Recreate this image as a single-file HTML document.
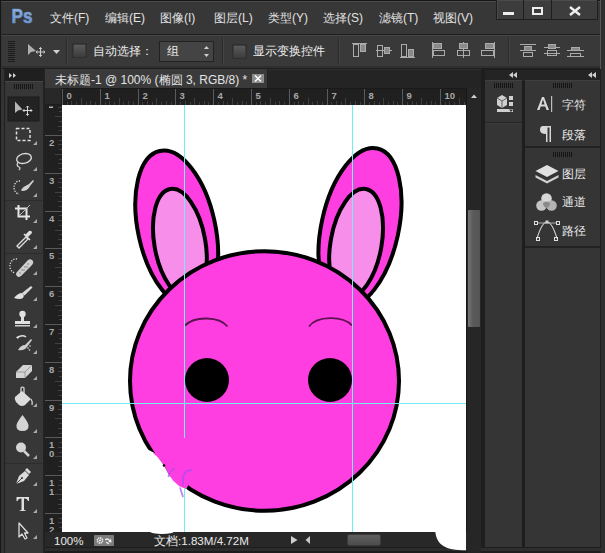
<!DOCTYPE html>
<html><head><meta charset="utf-8">
<style>
*{margin:0;padding:0;box-sizing:border-box}
html,body{width:605px;height:553px;overflow:hidden;background:#1b1b1b}
body{position:relative;font-family:"Liberation Sans",sans-serif;color:#cfcfcf;font-size:12px}
.a{position:absolute}
.menu span{position:absolute;top:10px;font-size:12px;line-height:16px;color:#e2e2e2;white-space:nowrap}
.opt{font-size:12px;color:#ececec;white-space:nowrap;line-height:14px}
.rl{position:absolute;font-size:10px;color:#a8a8a8;line-height:10px}
.ptxt{position:absolute;font-size:12px;color:#e8e8e8;line-height:14px;white-space:nowrap}
</style></head><body>
<!-- window frame -->
<div class="a" style="left:0;top:0;width:605px;height:553px;background:#161616"></div>
<div class="a" style="left:1px;top:1px;width:600px;height:552px;background:#333;border-top:1px solid #4a4a4a"></div>
<!-- right border -->
<div class="a" style="left:600px;top:0;width:5px;height:553px;background:#2e2e2e;border-left:1px solid #555"></div>

<!-- title/menu bar -->
<div class="a" style="left:2px;top:2px;width:598px;height:32px;background:#373737"></div>
<svg class="a" style="left:0;top:0" width="40" height="32"><defs><linearGradient id="psg" x1="0" y1="0" x2="0" y2="1"><stop offset="0" stop-color="#9ebde6"/><stop offset="1" stop-color="#5e88c6"/></linearGradient></defs><text x="11.5" y="23.3" font-family="Liberation Sans" font-weight="bold" font-size="20.5" fill="url(#psg)" stroke="#6f95cf" stroke-width="0.7" textLength="21" lengthAdjust="spacingAndGlyphs">Ps</text></svg>
<div class="menu">
<span style="left:50px">文件(F)</span>
<span style="left:105px">编辑(E)</span>
<span style="left:160px">图像(I)</span>
<span style="left:214px">图层(L)</span>
<span style="left:268px">类型(Y)</span>
<span style="left:323px">选择(S)</span>
<span style="left:379px">滤镜(T)</span>
<span style="left:433px">视图(V)</span>
</div>
<!-- window buttons -->
<div class="a" style="left:496px;top:0;width:102px;height:20px;background:#3d3d3d;border:1px solid #1e1e1e;border-top:none;box-shadow:inset 1px 1px 0 #4a4a4a"></div>
<div class="a" style="left:523px;top:0;width:1px;height:19px;background:#1e1e1e"></div>
<div class="a" style="left:551px;top:0;width:1px;height:19px;background:#1e1e1e"></div>
<div class="a" style="left:503px;top:12px;width:11px;height:3px;background:#eee"></div>
<div class="a" style="left:532px;top:7px;width:11px;height:8px;border:2px solid #eee"></div>
<svg class="a" style="left:567px;top:5px" width="16" height="12"><path d="M3 2 L13 10 M13 2 L3 10" stroke="#eee" stroke-width="2.4"/></svg>

<!-- options bar -->
<div class="a" style="left:2px;top:34px;width:598px;height:1px;background:#1e1e1e"></div>
<div class="a" style="left:2px;top:35px;width:598px;height:33px;background:#393939;border-top:1px solid #474747;border-bottom:2px solid #2f2f2f"></div>
<div class="a" style="left:2px;top:68px;width:598px;height:1px;background:#1e1e1e"></div>

<!-- options bar content -->
<svg class="a" style="left:0;top:35px" width="605" height="33">
 <g fill="#1c1c1c"><rect x="8" y="6" width="7" height="1"/><rect x="8" y="8" width="7" height="1"/><rect x="8" y="10" width="7" height="1"/><rect x="8" y="12" width="7" height="1"/><rect x="8" y="14" width="7" height="1"/><rect x="8" y="16" width="7" height="1"/><rect x="8" y="18" width="7" height="1"/><rect x="8" y="20" width="7" height="1"/><rect x="8" y="22" width="7" height="1"/><rect x="8" y="24" width="7" height="1"/><rect x="8" y="26" width="7" height="1"/></g>
 <path d="M28 9 L28 20 L31 17 L36 16 Z" fill="#b0b0b0"/>
 <path d="M40.5 12.5 V21.5 M36 17 H45" stroke="#d0d0d0" stroke-width="1.1"/>
 <path d="M39 14 L40.5 12.5 L42 14 M39 20 L40.5 21.5 L42 20 M37.5 15.5 L36 17 L37.5 18.5 M43.5 15.5 L45 17 L43.5 18.5" stroke="#d0d0d0" stroke-width="0.9" fill="none"/>
 <path d="M53 15 L60 15 L56.5 19 Z" fill="#cfcfcf"/>
 <rect x="66" y="3" width="1" height="27" fill="#2a2a2a"/><rect x="67" y="3" width="1" height="27" fill="#454545"/>
 <rect x="73" y="9" width="13" height="13" fill="#555" stroke="#262626" stroke-width="1"/>
 <rect x="74" y="10" width="11" height="11" fill="url(#cb)"/>
 <rect x="159.5" y="6.5" width="54" height="20" fill="#444" stroke="#222"/>
 <path d="M204 14 L206.5 11 L209 14 Z M204 19 L206.5 22 L209 19 Z" fill="#cfcfcf"/>
 <rect x="222" y="3" width="1" height="27" fill="#2a2a2a"/><rect x="223" y="3" width="1" height="27" fill="#454545"/>
 <rect x="233" y="10" width="13" height="13" fill="#555" stroke="#262626"/>
 <rect x="234" y="11" width="11" height="11" fill="url(#cb)"/>
 <rect x="338" y="3" width="1" height="27" fill="#2a2a2a"/><rect x="339" y="3" width="1" height="27" fill="#454545"/>
 <rect x="508" y="3" width="1" height="27" fill="#2a2a2a"/><rect x="509" y="3" width="1" height="27" fill="#454545"/>
 <defs><linearGradient id="cb" x1="0" y1="0" x2="0" y2="1"><stop offset="0" stop-color="#5a5a5a"/><stop offset="1" stop-color="#3e3e3e"/></linearGradient></defs>
 <g stroke="#ababab" stroke-width="1" fill="none">
  <!-- align top -->
  <path d="M352 8.5 H367"/><rect x="353.5" y="9.5" width="5" height="12"/><rect x="360.5" y="9.5" width="5" height="7" fill="#8a8a8a"/>
  <!-- align vcenter -->
  <path d="M376 15.5 H392"/><rect x="377.5" y="10.5" width="5" height="11"/><rect x="384.5" y="12.5" width="5" height="6" fill="#8a8a8a"/>
  <!-- align bottom -->
  <path d="M400 22.5 H415"/><rect x="401.5" y="9.5" width="5" height="12"/><rect x="408.5" y="14.5" width="5" height="7" fill="#8a8a8a"/>
  <!-- align left -->
  <path d="M432.5 7 V23"/><rect x="433.5" y="8.5" width="8" height="5" fill="#8a8a8a"/><rect x="433.5" y="15.5" width="11" height="5"/>
  <!-- align hcenter -->
  <path d="M463.5 7 V23"/><rect x="459.5" y="8.5" width="8" height="5" fill="#8a8a8a"/><rect x="457.5" y="15.5" width="12" height="5"/>
  <!-- align right -->
  <path d="M494.5 7 V23"/><rect x="485.5" y="8.5" width="8" height="5" fill="#8a8a8a"/><rect x="481.5" y="15.5" width="12" height="5"/>
  <!-- distribute -->
  <path d="M520 9.5 H536 M520 15.5 H536"/><rect x="524.5" y="11.5" width="7" height="4" fill="#8a8a8a"/><rect x="523.5" y="17.5" width="9" height="4"/>
  <path d="M544 12.5 H560 M544 18.5 H560"/><rect x="548.5" y="9.5" width="7" height="4" fill="#8a8a8a"/><rect x="547.5" y="15.5" width="9" height="5"/>
  <path d="M567 15.5 H584 M567 21.5 H584"/><rect x="571.5" y="12.5" width="8" height="3" fill="#8a8a8a"/><rect x="570.5" y="18.5" width="10" height="3"/>
 </g>
</svg>
<div class="a opt" style="left:93px;top:44px">自动选择：</div>
<div class="a opt" style="left:167px;top:44px">组</div>
<div class="a opt" style="left:253px;top:44px">显示变换控件</div>

<!-- left tool panel -->
<div class="a" style="left:1px;top:69px;width:44px;height:484px;background:#333"></div>
<div class="a" style="left:4px;top:69px;width:41px;height:484px;background:#222"></div>
<div class="a" style="left:5px;top:69px;width:38px;height:12px;background:#1f1f1f"></div>
<div class="a" style="left:5px;top:81px;width:38px;height:472px;background:#373737;border-top:1px solid #474747;border-left:1px solid #343434"></div>
<svg class="a" style="left:0;top:69px" width="45" height="484">
 <path d="M9 4 L12 6.5 L9 9 Z M13 4 L16 6.5 L13 9 Z" fill="#cfcfcf"/>
 <g fill="#161616"><rect x="14" y="15" width="1" height="5"/><rect x="16" y="15" width="1" height="5"/><rect x="18" y="15" width="1" height="5"/><rect x="20" y="15" width="1" height="5"/><rect x="22" y="15" width="1" height="5"/><rect x="24" y="15" width="1" height="5"/><rect x="26" y="15" width="1" height="5"/><rect x="28" y="15" width="1" height="5"/><rect x="30" y="15" width="1" height="5"/><rect x="32" y="15" width="1" height="5"/></g>
</svg>
<svg class="a" style="left:0;top:0" width="45" height="553">
 <rect x="8" y="97" width="31" height="24" fill="#232323" stroke="#1c1c1c"/>
 <g fill="#a9a9a9"><path d="M33 145 L37 141 L37 145 Z"/><path d="M33 171 L37 167 L37 171 Z"/><path d="M33 197 L37 193 L37 197 Z"/><path d="M33 223 L37 219 L37 223 Z"/><path d="M33 249 L37 245 L37 249 Z"/><path d="M33 275 L37 271 L37 275 Z"/><path d="M33 301 L37 297 L37 301 Z"/><path d="M33 328 L37 324 L37 328 Z"/><path d="M33 354 L37 350 L37 354 Z"/><path d="M33 380 L37 376 L37 380 Z"/><path d="M33 407 L37 403 L37 407 Z"/><path d="M33 433 L37 429 L37 433 Z"/><path d="M33 459 L37 455 L37 459 Z"/><path d="M33 486 L37 482 L37 486 Z"/><path d="M33 513 L37 509 L37 513 Z"/><path d="M33 539 L37 535 L37 539 Z"/></g>
 <!-- separators -->
 <g fill="#2c2c2c"><rect x="5" y="200" width="37" height="1"/><rect x="5" y="253" width="37" height="1"/><rect x="5" y="463" width="37" height="1"/></g>
 <!-- move -->
 <path d="M15 101.5 L15 113 L18 110.5 L22.5 109.5 Z" fill="#b5b5b5"/>
 <path d="M27.5 106 V115.5 M23 110.5 H32" stroke="#d6d6d6" stroke-width="1"/>
 <path d="M26 107.5 L27.5 106 L29 107.5 M26 114 L27.5 115.5 L29 114 M24.5 109 L23 110.5 L24.5 112 M30.5 109 L32 110.5 L30.5 112" stroke="#d6d6d6" stroke-width="0.9" fill="none"/>
 <!-- marquee -->
 <rect x="16.5" y="128.5" width="13.5" height="12" fill="none" stroke="#e0e0e0" stroke-width="1.5" stroke-dasharray="3 2"/>
 <!-- lasso -->
 <ellipse cx="24" cy="158.5" rx="7.5" ry="4.8" transform="rotate(-15 24 158.5)" fill="none" stroke="#d8d8d8" stroke-width="1.4"/>
 <path d="M18 162 Q16 166 19 167 Q21 168 19 170" fill="none" stroke="#d0d0d0" stroke-width="1.3"/>
 <!-- quick selection -->
 <path d="M20 181 A5 6 0 1 0 19 194" fill="none" stroke="#e0e0e0" stroke-width="1.4" stroke-dasharray="1.2 1.4"/>
 <path d="M21 190 Q24 186 29 184 L33 180 L34 181 L30 186 Q28 191 22 191 Z" fill="#cfcfcf"/>
 <!-- crop -->
 <path d="M18.5 205 V216.5 H30 M15 208.5 H26.5 V220" fill="none" stroke="#e6e6e6" stroke-width="2"/>
 <path d="M20 215 L30 205" stroke="#bbb" stroke-width="1"/>
 <!-- eyedropper -->
 <path d="M17 246 L26 237 L28 239 L19 248 Z" fill="none" stroke="#e0e0e0" stroke-width="1.3"/>
 <path d="M25 235 L29 231 Q32 230 32 233 L28 237 Z" fill="#e0e0e0"/>
 <path d="M24 234 L30 240" stroke="#e0e0e0" stroke-width="1.5"/>
 <!-- healing -->
 <path d="M17 272 L28 260 Q31 258 33 261 Q34 263 32 265 L21 276 Q18 278 17 276 Q15 274 17 272 Z" fill="#cfcfcf"/>
 <path d="M17 259 A6 7 0 0 0 15 273" fill="none" stroke="#e0e0e0" stroke-width="1.3" stroke-dasharray="1.2 1.4"/>
 <g fill="#707070"><circle cx="22" cy="270" r=".7"/><circle cx="25" cy="267" r=".7"/><circle cx="28" cy="264" r=".7"/><circle cx="20" cy="273" r=".7"/><circle cx="24" cy="270" r=".7"/><circle cx="27" cy="267" r=".7"/></g>
 <!-- brush -->
 <path d="M22 293 L31 286 L32.5 287.5 L24.5 295.5 Z" fill="#d8d8d8"/>
 <path d="M14 298 Q18 293 22 293 Q25 295 23 298 Q20 300 14 298 Z" fill="#e0e0e0"/>
 <!-- stamp -->
 <circle cx="22.5" cy="314" r="3.2" fill="#e0e0e0"/>
 <rect x="21" y="316" width="3" height="5" fill="#e0e0e0"/>
 <path d="M15 321 H30 V324 H15 Z" fill="#e0e0e0"/>
 <rect x="15" y="325" width="15" height="1.5" fill="#cfcfcf"/>
 <!-- history brush -->
 <path d="M17 338 Q22 334 26 337" fill="none" stroke="#e0e0e0" stroke-width="1.5"/>
 <path d="M16 337 L19 336 L18 339 Z" fill="#e0e0e0"/>
 <path d="M18 350 Q21 345 25 345 L31 339 L32 340 L27 347 Q24 351 18 350 Z" fill="#cfcfcf"/>
 <g fill="#e6e6e6"><circle cx="28" cy="348" r=".8"/><circle cx="30" cy="346" r=".8"/><circle cx="29.5" cy="350" r=".8"/></g>
 <!-- eraser -->
 <path d="M16 372 L23 365 L32 365 L32 371 L25 378 L16 378 Z" fill="#d4d4d4"/>
 <path d="M16 372 H25 L32 365 M25 372 V378" stroke="#8a8a8a" stroke-width="0.8" fill="none"/>
 <!-- paint bucket -->
 <path d="M15 397 L22 391 L31 399 L25 405 Q22 407 19 405 L16 402 Q14 399 15 397 Z" fill="#dcdcdc"/>
 <path d="M21 395 V388 Q22 386 24 388 V396" fill="none" stroke="#e0e0e0" stroke-width="1.2"/>
 <path d="M31 399 Q33 402 32 405" fill="none" stroke="#d8d8d8" stroke-width="1.3"/>
 <!-- blur drop -->
 <path d="M22.5 415 Q17 422 16.5 425 Q16 431 22.5 431 Q29 431 28.5 425 Q28 422 22.5 415 Z" fill="#d4d4d4"/>
 <!-- dodge -->
 <circle cx="21" cy="447.5" r="5" fill="#d4d4d4"/>
 <path d="M24 451 L29 456" stroke="#d4d4d4" stroke-width="2.5"/>
 <!-- pen -->
 <path d="M16 484 L19 476 L25 471 L29 475 L24 481 Z" fill="#dcdcdc"/>
 <path d="M25 470 L27 468 L31 472 L29 474 Z" fill="#dcdcdc"/>
 <path d="M16 484 L22 478" stroke="#333" stroke-width="0.9"/>
 <circle cx="22" cy="478" r="1" fill="#333"/>
 <!-- type -->
 <path d="M16.5 497 H29 V501 H28 Q27.5 498.5 25 498.5 H24 V509.5 Q24 510.5 26 510.5 V511 H19.5 V510.5 Q21.5 510.5 21.5 509.5 V498.5 H20.5 Q18 498.5 17.5 501 H16.5 Z" fill="#dedede"/>
 <!-- path select -->
 <path d="M19 523 L19 537 L22 534 L25 539 L27 538 L24.5 533 L28 533 Z" fill="none" stroke="#dcdcdc" stroke-width="1.3" stroke-linejoin="round"/>
</svg>

<!-- document area -->
<div class="a" style="left:45px;top:69px;width:440px;height:484px;background:#242424;border-top:1px solid #2f2f2f"></div>
<!-- tab -->
<div class="a" style="left:45px;top:69px;width:223px;height:19px;background:#3a3a3a;border-right:1px solid #222"></div>
<div class="a" style="left:55px;top:73px;font-size:12px;line-height:14px;color:#e4e4e4;white-space:nowrap">未标题-1 @ 100% (椭圆 3, RGB/8) *</div>
<div class="a" style="left:252px;top:74px;width:12px;height:9px;background:#8c8c8c"></div>
<svg class="a" style="left:252px;top:74px" width="12" height="9"><path d="M3 1.5 L9 7.5 M9 1.5 L3 7.5" stroke="#fff" stroke-width="1.5"/></svg>
<!-- rulers -->
<div class="a" style="left:45px;top:88px;width:421px;height:17px;background:#202020;border-top:1px solid #1a1a1a"></div>
<div class="a" style="left:45px;top:105px;width:17px;height:427px;background:#202020"></div>
<div class="a" style="left:45px;top:88px;width:17px;height:17px;background:#282828;border-right:1px solid #1c1c1c;border-bottom:1px solid #1c1c1c"></div>
<svg class="a" style="left:0;top:0" width="605" height="553" id="rulers">
<g fill="#404040">
<rect x="62" y="89" width="1" height="16" fill="#5a5a5a"/>
<rect x="67" y="102" width="1" height="3"/>
<rect x="71" y="101" width="1" height="4"/>
<rect x="76" y="102" width="1" height="3"/>
<rect x="81" y="98" width="1" height="7"/>
<rect x="86" y="102" width="1" height="3"/>
<rect x="90" y="101" width="1" height="4"/>
<rect x="95" y="102" width="1" height="3"/>
<rect x="100" y="89" width="1" height="16" fill="#5a5a5a"/>
<rect x="105" y="102" width="1" height="3"/>
<rect x="109" y="101" width="1" height="4"/>
<rect x="114" y="102" width="1" height="3"/>
<rect x="119" y="98" width="1" height="7"/>
<rect x="123" y="102" width="1" height="3"/>
<rect x="128" y="101" width="1" height="4"/>
<rect x="133" y="102" width="1" height="3"/>
<rect x="138" y="89" width="1" height="16" fill="#5a5a5a"/>
<rect x="142" y="102" width="1" height="3"/>
<rect x="147" y="101" width="1" height="4"/>
<rect x="152" y="102" width="1" height="3"/>
<rect x="156" y="98" width="1" height="7"/>
<rect x="161" y="102" width="1" height="3"/>
<rect x="166" y="101" width="1" height="4"/>
<rect x="171" y="102" width="1" height="3"/>
<rect x="175" y="89" width="1" height="16" fill="#5a5a5a"/>
<rect x="180" y="102" width="1" height="3"/>
<rect x="185" y="101" width="1" height="4"/>
<rect x="190" y="102" width="1" height="3"/>
<rect x="194" y="98" width="1" height="7"/>
<rect x="199" y="102" width="1" height="3"/>
<rect x="204" y="101" width="1" height="4"/>
<rect x="208" y="102" width="1" height="3"/>
<rect x="213" y="89" width="1" height="16" fill="#5a5a5a"/>
<rect x="218" y="102" width="1" height="3"/>
<rect x="223" y="101" width="1" height="4"/>
<rect x="227" y="102" width="1" height="3"/>
<rect x="232" y="98" width="1" height="7"/>
<rect x="237" y="102" width="1" height="3"/>
<rect x="242" y="101" width="1" height="4"/>
<rect x="246" y="102" width="1" height="3"/>
<rect x="251" y="89" width="1" height="16" fill="#5a5a5a"/>
<rect x="256" y="102" width="1" height="3"/>
<rect x="260" y="101" width="1" height="4"/>
<rect x="265" y="102" width="1" height="3"/>
<rect x="270" y="98" width="1" height="7"/>
<rect x="275" y="102" width="1" height="3"/>
<rect x="279" y="101" width="1" height="4"/>
<rect x="284" y="102" width="1" height="3"/>
<rect x="289" y="89" width="1" height="16" fill="#5a5a5a"/>
<rect x="294" y="102" width="1" height="3"/>
<rect x="298" y="101" width="1" height="4"/>
<rect x="303" y="102" width="1" height="3"/>
<rect x="308" y="98" width="1" height="7"/>
<rect x="312" y="102" width="1" height="3"/>
<rect x="317" y="101" width="1" height="4"/>
<rect x="322" y="102" width="1" height="3"/>
<rect x="327" y="89" width="1" height="16" fill="#5a5a5a"/>
<rect x="331" y="102" width="1" height="3"/>
<rect x="336" y="101" width="1" height="4"/>
<rect x="341" y="102" width="1" height="3"/>
<rect x="345" y="98" width="1" height="7"/>
<rect x="350" y="102" width="1" height="3"/>
<rect x="355" y="101" width="1" height="4"/>
<rect x="360" y="102" width="1" height="3"/>
<rect x="364" y="89" width="1" height="16" fill="#5a5a5a"/>
<rect x="369" y="102" width="1" height="3"/>
<rect x="374" y="101" width="1" height="4"/>
<rect x="379" y="102" width="1" height="3"/>
<rect x="383" y="98" width="1" height="7"/>
<rect x="388" y="102" width="1" height="3"/>
<rect x="393" y="101" width="1" height="4"/>
<rect x="397" y="102" width="1" height="3"/>
<rect x="402" y="89" width="1" height="16" fill="#5a5a5a"/>
<rect x="407" y="102" width="1" height="3"/>
<rect x="412" y="101" width="1" height="4"/>
<rect x="416" y="102" width="1" height="3"/>
<rect x="421" y="98" width="1" height="7"/>
<rect x="426" y="102" width="1" height="3"/>
<rect x="431" y="101" width="1" height="4"/>
<rect x="435" y="102" width="1" height="3"/>
<rect x="440" y="89" width="1" height="16" fill="#5a5a5a"/>
<rect x="445" y="102" width="1" height="3"/>
<rect x="449" y="101" width="1" height="4"/>
<rect x="454" y="102" width="1" height="3"/>
<rect x="459" y="98" width="1" height="7"/>
<rect x="464" y="102" width="1" height="3"/>
</g>
<g font-family="Liberation Sans" font-size="9.5" font-weight="bold" fill="#a8a8a8">
<text x="66.5" y="98.5">0</text>
<text x="104.5" y="98.5">1</text>
<text x="142.5" y="98.5">2</text>
<text x="179.5" y="98.5">3</text>
<text x="217.5" y="98.5">4</text>
<text x="255.5" y="98.5">5</text>
<text x="293.5" y="98.5">6</text>
<text x="331.5" y="98.5">7</text>
<text x="368.5" y="98.5">8</text>
<text x="406.5" y="98.5">9</text>
<text x="444.5" y="98.5">10</text>
</g>
<g fill="#404040">
<rect x="58" y="107" width="4" height="1"/>
<rect x="59" y="111" width="3" height="1"/>
<rect x="55" y="116" width="7" height="1"/>
<rect x="59" y="121" width="3" height="1"/>
<rect x="58" y="126" width="4" height="1"/>
<rect x="59" y="130" width="3" height="1"/>
<rect x="45" y="135" width="17" height="1" fill="#5a5a5a"/>
<rect x="59" y="140" width="3" height="1"/>
<rect x="58" y="144" width="4" height="1"/>
<rect x="59" y="149" width="3" height="1"/>
<rect x="55" y="154" width="7" height="1"/>
<rect x="59" y="159" width="3" height="1"/>
<rect x="58" y="163" width="4" height="1"/>
<rect x="59" y="168" width="3" height="1"/>
<rect x="45" y="173" width="17" height="1" fill="#5a5a5a"/>
<rect x="59" y="178" width="3" height="1"/>
<rect x="58" y="182" width="4" height="1"/>
<rect x="59" y="187" width="3" height="1"/>
<rect x="55" y="192" width="7" height="1"/>
<rect x="59" y="196" width="3" height="1"/>
<rect x="58" y="201" width="4" height="1"/>
<rect x="59" y="206" width="3" height="1"/>
<rect x="45" y="211" width="17" height="1" fill="#5a5a5a"/>
<rect x="59" y="215" width="3" height="1"/>
<rect x="58" y="220" width="4" height="1"/>
<rect x="59" y="225" width="3" height="1"/>
<rect x="55" y="230" width="7" height="1"/>
<rect x="59" y="234" width="3" height="1"/>
<rect x="58" y="239" width="4" height="1"/>
<rect x="59" y="244" width="3" height="1"/>
<rect x="45" y="248" width="17" height="1" fill="#5a5a5a"/>
<rect x="59" y="253" width="3" height="1"/>
<rect x="58" y="258" width="4" height="1"/>
<rect x="59" y="263" width="3" height="1"/>
<rect x="55" y="267" width="7" height="1"/>
<rect x="59" y="272" width="3" height="1"/>
<rect x="58" y="277" width="4" height="1"/>
<rect x="59" y="281" width="3" height="1"/>
<rect x="45" y="286" width="17" height="1" fill="#5a5a5a"/>
<rect x="59" y="291" width="3" height="1"/>
<rect x="58" y="296" width="4" height="1"/>
<rect x="59" y="300" width="3" height="1"/>
<rect x="55" y="305" width="7" height="1"/>
<rect x="59" y="310" width="3" height="1"/>
<rect x="58" y="315" width="4" height="1"/>
<rect x="59" y="319" width="3" height="1"/>
<rect x="45" y="324" width="17" height="1" fill="#5a5a5a"/>
<rect x="59" y="329" width="3" height="1"/>
<rect x="58" y="333" width="4" height="1"/>
<rect x="59" y="338" width="3" height="1"/>
<rect x="55" y="343" width="7" height="1"/>
<rect x="59" y="348" width="3" height="1"/>
<rect x="58" y="352" width="4" height="1"/>
<rect x="59" y="357" width="3" height="1"/>
<rect x="45" y="362" width="17" height="1" fill="#5a5a5a"/>
<rect x="59" y="367" width="3" height="1"/>
<rect x="58" y="371" width="4" height="1"/>
<rect x="59" y="376" width="3" height="1"/>
<rect x="55" y="381" width="7" height="1"/>
<rect x="59" y="385" width="3" height="1"/>
<rect x="58" y="390" width="4" height="1"/>
<rect x="59" y="395" width="3" height="1"/>
<rect x="45" y="400" width="17" height="1" fill="#5a5a5a"/>
<rect x="59" y="404" width="3" height="1"/>
<rect x="58" y="409" width="4" height="1"/>
<rect x="59" y="414" width="3" height="1"/>
<rect x="55" y="418" width="7" height="1"/>
<rect x="59" y="423" width="3" height="1"/>
<rect x="58" y="428" width="4" height="1"/>
<rect x="59" y="433" width="3" height="1"/>
<rect x="45" y="437" width="17" height="1" fill="#5a5a5a"/>
<rect x="59" y="442" width="3" height="1"/>
<rect x="58" y="447" width="4" height="1"/>
<rect x="59" y="452" width="3" height="1"/>
<rect x="55" y="456" width="7" height="1"/>
<rect x="59" y="461" width="3" height="1"/>
<rect x="58" y="466" width="4" height="1"/>
<rect x="59" y="470" width="3" height="1"/>
<rect x="45" y="475" width="17" height="1" fill="#5a5a5a"/>
<rect x="59" y="480" width="3" height="1"/>
<rect x="58" y="485" width="4" height="1"/>
<rect x="59" y="489" width="3" height="1"/>
<rect x="55" y="494" width="7" height="1"/>
<rect x="59" y="499" width="3" height="1"/>
<rect x="58" y="504" width="4" height="1"/>
<rect x="59" y="508" width="3" height="1"/>
<rect x="45" y="513" width="17" height="1" fill="#5a5a5a"/>
<rect x="59" y="518" width="3" height="1"/>
<rect x="58" y="522" width="4" height="1"/>
<rect x="59" y="527" width="3" height="1"/>
</g>
<g font-family="Liberation Sans" font-size="9.5" font-weight="bold" fill="#a8a8a8">
<text x="49" y="146">2</text>
<text x="49" y="184">3</text>
<text x="49" y="222">4</text>
<text x="49" y="259">5</text>
<text x="49" y="297">6</text>
<text x="49" y="335">7</text>
<text x="49" y="373">8</text>
<text x="49" y="411">9</text>
<text x="49" y="448">1</text>
<text x="49" y="457">0</text>
<text x="49" y="486">1</text>
<text x="49" y="495">1</text>
<text x="49" y="524">1</text>
<text x="49" y="533">2</text>
</g>
<rect x="49" y="106.5" width="4" height="1.5" fill="#b0b0b0"/>
</svg>
<!-- canvas -->
<div class="a" style="left:62px;top:105px;width:404px;height:427px;background:#fff"></div>
<svg class="a" style="left:0;top:0" width="605" height="553">
 <defs><clipPath id="cv"><rect x="62" y="105" width="404" height="427"/></clipPath></defs>
 <g clip-path="url(#cv)">
  <g stroke="#000" stroke-width="4">
   <ellipse cx="176.7" cy="228.9" rx="38.6" ry="79.8" transform="rotate(-12.3 176.7 228.9)" fill="#ff3ee2"/>
   <ellipse cx="179.9" cy="243.3" rx="25.5" ry="55.1" transform="rotate(-10.1 179.9 243.3)" fill="#f68eea"/>
   <ellipse cx="360" cy="227.6" rx="38.6" ry="81" transform="rotate(12.3 360 227.6)" fill="#ff3ee2"/>
   <ellipse cx="356.1" cy="243.3" rx="25.5" ry="55.1" transform="rotate(10.1 356.1 243.3)" fill="#f68eea"/>
   <ellipse cx="264.5" cy="381" rx="134.5" ry="129.8" fill="#ff3ee2"/>
  </g>
  <circle cx="207" cy="380" r="22" fill="#000"/>
  <circle cx="330" cy="380" r="22" fill="#000"/>
  <path d="M185 325.5 A24 14 0 0 1 227.5 326.5" stroke="#5a1450" stroke-width="1.8" fill="none"/>
  <path d="M309 326.5 A24 14 0 0 1 352 325.5" stroke="#5a1450" stroke-width="1.8" fill="none"/>
  <path d="M138 438 L147.7 449.5 L154 452.7 Q158 456 160.3 460.3 L164 465.3 L168 473 L173 480.5 L179.3 486.2 L183.7 488.1 L186.5 489 L187 505 L120 505 Z" fill="#fff"/>
  <path d="M153 453.5 Q158 456 160.3 460.3 L164 465.3 L168 473 L173 480.5 L179.3 486.2 L183.7 488.1 L186.5 489 L189 483 L175 462 L162 452 Z" fill="#ff3ee2"/><circle cx="164" cy="465.5" r="1.3" fill="#000"/>
  <g fill="none" stroke="#a64cf0" stroke-width="1.8" opacity=".7">
   <path d="M175 468.5 Q169.5 470 168.5 477"/>
   <path d="M192 470 Q183 470 183 480 L183 486"/>
   <path d="M180 487.5 L183 497"/>
  </g>
  <!-- guides -->
  <rect x="184" y="105" width="1" height="333" fill="#70eef0"/><rect x="184" y="488" width="1" height="44" fill="#70eef0"/>
  <rect x="352" y="105" width="1" height="427" fill="#70eef0"/>
  <rect x="62" y="403" width="404" height="1" fill="#70eef0"/>
 </g>
</svg>
<!-- vertical scrollbar -->
<div class="a" style="left:466px;top:88px;width:15px;height:462px;background:#262626;border-left:1px solid #161616"></div>
<svg class="a" style="left:467px;top:88px" width="14" height="20"><path d="M4 10 L7 6.5 L10 10 Z" fill="#cfcfcf"/></svg>
<div class="a" style="left:468px;top:210px;width:12px;height:117px;background:linear-gradient(90deg,#767676,#5a5a5a 40%,#555);border-radius:1px"></div>
<!-- status bar -->
<div class="a" style="left:45px;top:532px;width:422px;height:15px;background:#282828"></div>
<div class="a" style="left:45px;top:547px;width:422px;height:6px;background:#2c2c2c;border-top:1px solid #1c1c1c;border-bottom:2px solid #1c1c1c"></div>
<div class="a" style="left:54px;top:535px;font-size:11.5px;line-height:12px;color:#e8e8e8">100%</div>
<div class="a" style="left:94px;top:535px;width:20px;height:11px;background:#7c7c7c;border-radius:1px"></div>
<svg class="a" style="left:94px;top:535px" width="20" height="11"><circle cx="6" cy="5.5" r="2.6" fill="none" stroke="#f0f0f0" stroke-width="1.6" stroke-dasharray="1.3 0.7"/><circle cx="6" cy="5.5" r="1" fill="#f0f0f0"/><path d="M11 4 Q14 2 16 5 L17 3.5 L17.5 7.5 L14 7 L15.2 6 Q13.5 4 11.5 5.5 Z" fill="#f0f0f0"/><path d="M12 7 L15 9" stroke="#f0f0f0" stroke-width="1.2"/></svg>
<div class="a" style="left:154px;top:534px;font-size:11.6px;line-height:13px;color:#e8e8e8;white-space:nowrap">文档:1.83M/4.72M</div>
<div class="a" style="left:150px;top:529px;width:24px;height:5px;background:#fff;border-radius:50%"></div>
<svg class="a" style="left:288px;top:533px" width="26" height="14"><path d="M3 3 L9.5 7 L3 11 Z" fill="#d0d0d0"/><path d="M22 3 L17.5 7 L22 11 Z" fill="#c8c8c8"/></svg>

<div class="a" style="left:347px;top:534px;width:34px;height:12px;background:linear-gradient(#5e5e5e,#4c4c4c);border:1px solid #3a3a3a;border-radius:2px"></div>
<svg class="a" style="left:0;top:0" width="605" height="553"><path d="M434.5 531 L435.3 532 C 437 545, 445 550.3, 466 550.3 L466 531 Z" fill="#fff"/></svg>

<!-- right panel dock -->
<div class="a" style="left:481px;top:69px;width:120px;height:484px;background:#1e1e1e"></div>
<div class="a" style="left:485px;top:70px;width:115px;height:11px;background:#242424"></div>
<div class="a" style="left:485px;top:81px;width:37px;height:466px;background:#353535"></div>
<div class="a" style="left:525px;top:81px;width:75px;height:466px;background:#353535"></div>
<div class="a" style="left:481px;top:548px;width:120px;height:3px;background:#2e2e2e"></div>
<svg class="a" style="left:480px;top:60px" width="125" height="493">
 <path d="M29 15 L33 12 L33 18 Z M33 15 L37 12 L37 18 Z" fill="#cfcfcf"/>
 <path d="M108 15 L112 12 L112 18 Z M112 15 L116 12 L116 18 Z" fill="#cfcfcf"/>
 <g fill="#141414">
  <rect x="14" y="23" width="1" height="5"/><rect x="16" y="23" width="1" height="5"/><rect x="18" y="23" width="1" height="5"/><rect x="20" y="23" width="1" height="5"/><rect x="22" y="23" width="1" height="5"/><rect x="24" y="23" width="1" height="5"/><rect x="26" y="23" width="1" height="5"/><rect x="28" y="23" width="1" height="5"/><rect x="30" y="23" width="1" height="5"/><rect x="32" y="23" width="1" height="5"/>
  <rect x="73" y="23" width="1" height="5"/><rect x="75" y="23" width="1" height="5"/><rect x="77" y="23" width="1" height="5"/><rect x="79" y="23" width="1" height="5"/><rect x="81" y="23" width="1" height="5"/><rect x="83" y="23" width="1" height="5"/><rect x="85" y="23" width="1" height="5"/><rect x="87" y="23" width="1" height="5"/><rect x="89" y="23" width="1" height="5"/><rect x="91" y="23" width="1" height="5"/>
  <rect x="73" y="92" width="1" height="5"/><rect x="75" y="92" width="1" height="5"/><rect x="77" y="92" width="1" height="5"/><rect x="79" y="92" width="1" height="5"/><rect x="81" y="92" width="1" height="5"/><rect x="83" y="92" width="1" height="5"/><rect x="85" y="92" width="1" height="5"/><rect x="87" y="92" width="1" height="5"/><rect x="89" y="92" width="1" height="5"/><rect x="91" y="92" width="1" height="5"/>
 </g>
 <!-- group separators -->
 <rect x="5" y="62" width="37" height="1" fill="#222"/><rect x="5" y="63" width="37" height="1" fill="#3c3c3c"/>
 <rect x="45" y="86" width="75" height="2" fill="#222"/>
 <rect x="45" y="186" width="75" height="2" fill="#222"/>
 <rect x="5" y="20" width="37" height="1" fill="#3f3f3f"/>
 <rect x="45" y="20" width="75" height="1" fill="#3f3f3f"/>
 <!-- 3D icon -->
 <path d="M17 38 L22 35 L27 38 L27 45 L22 48 L17 45 Z" fill="#cfcfcf"/>
 <path d="M17 38 L22 41 L27 38 M22 41 V48" stroke="#555" stroke-width="0.9" fill="none"/>
 <rect x="29" y="36" width="4" height="4" fill="#cfcfcf"/><rect x="29" y="42" width="4" height="4" fill="#cfcfcf"/>
 <rect x="17" y="49" width="16" height="3" fill="#cfcfcf"/><path d="M29 49.5 L33 49.5 L31 52 Z" fill="#333"/>
 <!-- character A| -->
 <path d="M57 50 L62 37 L64 37 L69 50 L66.5 50 L65.3 46.5 L60.7 46.5 L59.5 50 Z M61.4 44.5 H64.6 L63 39.5 Z" fill="#d8d8d8"/>
 <rect x="71" y="36" width="1.2" height="16" fill="#bdbdbd"/>
 <!-- paragraph -->
 <path d="M63 66 H71 V82 H69.5 V67.5 H67.5 V82 H66 V74 Q60 74 60 70 Q60 66 63 66 Z" fill="#d8d8d8"/>
 <!-- layers -->
 <path d="M55.5 111 L67 105 L78.5 111 L67 117 Z" fill="#e0e0e0"/>
 <path d="M55.5 115 L67 121 L78.5 115 L78.5 117.5 L67 123.5 L55.5 117.5 Z" fill="#d0d0d0"/>
 <!-- channels -->
 <circle cx="66.5" cy="138.5" r="5.3" fill="#d8d8d8"/><circle cx="61.5" cy="145.5" r="5.3" fill="#c4c4c4"/><circle cx="71.5" cy="145.5" r="5.3" fill="#b4b4b4"/>
 <path d="M63 143 A5.3 5.3 0 0 1 70 143 A5.3 5.3 0 0 1 66.5 148 A5.3 5.3 0 0 1 63 143 Z" fill="#8a8a8a"/>
 <!-- paths -->
 <path d="M57 178.5 Q62 162 67 162 Q72 162 77 178.5" fill="none" stroke="#d0d0d0" stroke-width="1.2"/>
 <path d="M57 163 H77" stroke="#c0c0c0" stroke-width="0.9"/>
 <rect x="54.5" y="161.5" width="3" height="3" fill="none" stroke="#e0e0e0"/><rect x="76.5" y="161.5" width="3" height="3" fill="none" stroke="#e0e0e0"/>
 <rect x="56.5" y="177.5" width="3" height="3" fill="none" stroke="#e0e0e0"/><rect x="74.5" y="177.5" width="3" height="3" fill="none" stroke="#e0e0e0"/>
 <rect x="65.5" y="160.5" width="3" height="3" fill="#d0d0d0"/>
</svg>
<div class="ptxt" style="left:562px;top:98px">字符</div>
<div class="ptxt" style="left:562px;top:128px">段落</div>
<div class="ptxt" style="left:562px;top:167px">图层</div>
<div class="ptxt" style="left:562px;top:195px">通道</div>
<div class="ptxt" style="left:562px;top:224px">路径</div>
</body></html>
